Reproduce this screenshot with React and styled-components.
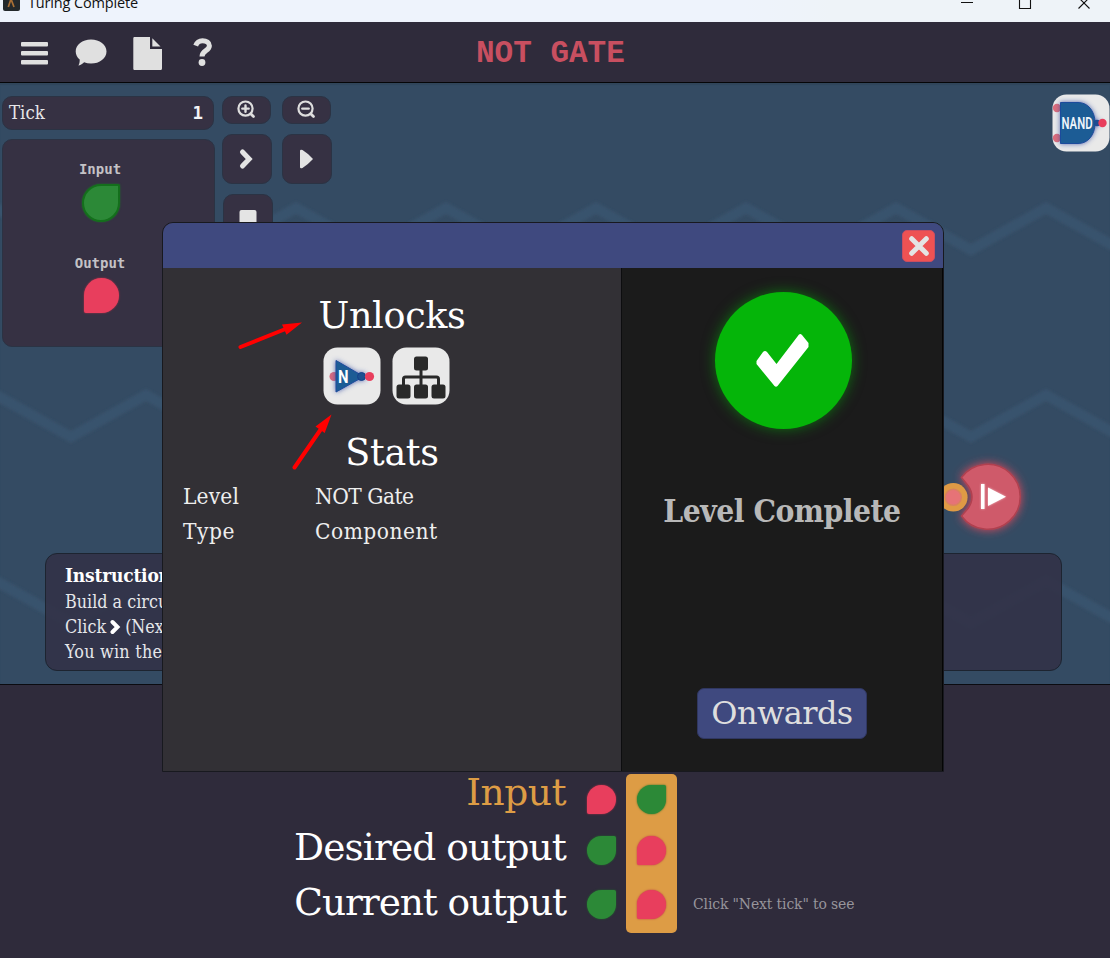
import React from "react";
import styled, { createGlobalStyle, css } from "styled-components";

const SLAB = '"DejaVu Serif Condensed", "DejaVu Serif", serif';
const WIDE_SLAB = '"DejaVu Serif", serif';

const GlobalStyle = createGlobalStyle`
  * { box-sizing: border-box; }
  body { margin: 0; background: #2f2b3b; }
`;

const Screen = styled.div`
  position: relative;
  width: 1110px;
  height: 958px;
  overflow: hidden;
  display: flex;
  flex-direction: column;
  background: #2f2b3b;
`;

const TitleBar = styled.header`
  height: 22px;
  flex: none;
  display: flex;
  align-items: flex-start;
  justify-content: space-between;
  padding-left: 3px;
  overflow: hidden;
  background: linear-gradient(90deg, #eef3fc 0 67%, #eef3f8 75% 100%);
`;

const AppName = styled.div`
  display: flex;
  gap: 8px;
  color: #111;
  font: 14.5px/20px "Open Sans", "Noto Sans", sans-serif;
  letter-spacing: -0.15px;
  white-space: nowrap;

  svg { display: block; }
  span { margin-top: -7px; }
`;

const Toolbar = styled.nav`
  height: 61px;
  flex: none;
  display: grid;
  grid-template-columns: 476px 1fr;
  border-bottom: 1px solid #050507;
  background: #2f2b3b;
`;

const LevelName = styled.h1`
  margin: 0;
  color: #c84f60;
  font: bold 31px/60px "Liberation Mono", monospace;
  padding-top: 2px;
  white-space: pre;
`;

const Board = styled.main`
  position: relative;
  height: 601px;
  flex: none;
  display: flex;
  flex-direction: column;
  justify-content: space-between;
  overflow: hidden;
  background: #344b63;
  box-shadow: inset 0 2px 1px #30455a;
`;

const Waves = styled.svg`
  position: absolute;
  inset: 0;
`;

const BoardTop = styled.div`
  position: relative;
  display: flex;
  padding: 13px 0 0 2px;
`;

const Tools = styled.div`
  display: grid;
  grid-template-columns: 50px 50px;
  gap: 10px;
  margin-left: 8px;
  align-content: start;
`;

const boxed = css`
  background: #363143;
  border: 1px solid #2b3344;
  border-radius: 10px;
`;

const ToolButton = styled.button`
  ${boxed}
  width: ${(p) => (p.$small ? 49 : 50)}px;
  height: ${(p) => (p.$small ? 28 : 50)}px;
  margin-left: ${(p) => p.$indent || 0}px;
  padding: 0;
  display: grid;
  place-items: center;

  svg { display: block; }
`;

const SidePanels = styled.div`
  width: 212px;
  display: flex;
  flex-direction: column;
  gap: 9px;
`;

const TickBox = styled.div`
  ${boxed}
  height: 34px;
  width: 212px;
  display: flex;
  align-items: center;
  justify-content: space-between;
  padding: 0 10px 0 6px;
`;

const Signals = styled.div`
  ${boxed}
  width: 213px;
  height: 208px;
  display: flex;
  flex-direction: column;
  align-items: center;
  padding: 21px 17px 0 0;

  i { position: relative; left: 1px; }
`;

const SignalLabel = styled.div`
  color: #c4c2c6;
  font: bold 14px/17px "DejaVu Sans Mono", monospace;
  margin-top: ${(p) => p.$top || 0}px;
  margin-bottom: 6px;
`;

const Counter = styled.span`
  color: #f4f4f6;
  font: bold 17.5px/32px "DejaVu Sans Mono", monospace;
`;

const Label = styled.span`
  font-family: ${(p) => (p.$wide ? WIDE_SLAB : SLAB)};
  font-size: ${(p) => p.$size}px;
  line-height: ${(p) => p.$line}px;
  letter-spacing: ${(p) => p.$track || 0}px;
  font-weight: ${(p) => (p.$bold ? 700 : 400)};
  color: ${(p) => p.$color || "#fff"};
  white-space: nowrap;
  display: block;
`;

const Leaf = styled.i`
  display: block;
  flex: none;
  width: ${(p) => p.$size}px;
  height: ${(p) => p.$size}px;
  background: ${(p) => (p.$on ? "#2c8937" : "#e83e5d")};
  border-radius: ${(p) => (p.$on ? "50% 2px 50% 50%" : "50% 50% 50% 2px")};
  border: ${(p) => (p.$on && p.$rim ? "2px solid #146f1c" : "0")};
  box-shadow: 0 0 2px ${(p) => (p.$on ? "#1f6f2a" : "#b9314a")};
`;

const NandTile = styled.div`
  margin-left: auto;
  margin-top: -2px;
  width: 58px;
  height: 58px;
`;

const OutputPin = styled.svg`
  position: absolute;
  left: 930px;
  top: 364px;
`;

const Instructions = styled.section`
  position: relative;
  width: 1017px;
  height: 118px;
  margin: 0 0 13px 45px;
  padding: 8px 19px;
  border: 1px solid #1d2430;
  border-radius: 12px;
  background: rgba(50, 49, 70, 0.86);
  overflow: hidden;
`;

const InlineRow = styled.div`
  display: flex;
  align-items: center;
  gap: 4px;
`;

const Results = styled.footer`
  flex: 1;
  border-top: 1px solid #0b0b10;
  display: grid;
  grid-template-columns: 566px 29px 51px auto;
  justify-content: start;
  align-items: start;
  background: #2f2b3b;
`;

const ResultLabels = styled.div`
  padding-top: 80px;
  text-align: right;
`;

const Chips = styled.div`
  display: flex;
  flex-direction: column;
  align-items: center;
  height: 159px;
  margin-top: 89px;
  padding-top: 11px;
  gap: 22px;
  margin-left: ${(p) => (p.$active ? 31 : 21)}px;
  width: ${(p) => (p.$active ? 51 : 29)}px;
  border-radius: 5px;
  background: ${(p) => (p.$active ? "#dd9c45" : "transparent")};

  i:last-child { margin-top: 3px; }
`;

const Hint = styled.div`
  margin: 206px 0 0 47px;
`;

const Dialog = styled.section`
  position: absolute;
  left: 162px;
  top: 222px;
  width: 782px;
  height: 550px;
  display: grid;
  grid-template: 45px 1fr / 459px 1fr;
  border: 1px solid #18191f;
  border-radius: 11px 11px 0 0;
  overflow: hidden;
`;

const DialogBar = styled.header`
  grid-column: 1 / -1;
  display: flex;
  justify-content: flex-end;
  align-items: center;
  padding: 1px 8px 0 0;
  background: #3f497f;
`;

const CloseButton = styled.button`
  width: 33px;
  height: 32px;
  padding: 0;
  border: 1px solid #c94e61;
  border-radius: 5px;
  background: #ee5253;
  display: grid;
  place-items: center;
`;

const Rewards = styled.div`
  background: #323035;
  border-right: 1px solid #0d0d0f;
  padding-top: 23px;
  display: flex;
  flex-direction: column;
  align-items: center;
`;

const Tiles = styled.div`
  display: flex;
  gap: 11px;
  height: 58px;
  margin: 6px 12px 23px 0;

  svg { display: block; }
`;

const Stats = styled.dl`
  align-self: stretch;
  display: grid;
  grid-template-columns: 132px 1fr;
  grid-auto-rows: 35px;
  margin: 1px 0 0 20px;
`;

const Outcome = styled.div`
  background: #1b1b1b;
  border-right: 1px solid #050505;
  display: flex;
  flex-direction: column;
  align-items: center;
  justify-content: space-between;
  padding: 24px 0 32px;
`;

const Badge = styled.div`
  width: 137px;
  height: 137px;
  margin-left: 2px;
  border-radius: 50%;
  background: #05b509;
  box-shadow: 0 0 14px rgba(5, 181, 9, 0.55);
  display: grid;
  place-items: center;
`;

const Verdict = styled.div`
  margin-bottom: 95px;
`;

const OnwardsButton = styled.button`
  width: 170px;
  height: 51px;
  padding: 0;
  border: 1px solid #303761;
  border-radius: 7px;
  background: #3f497f;
  text-align: center;
`;

const Arrows = styled.svg`
  position: absolute;
  left: 230px;
  top: 310px;
`;

const zig = (y) => {
  const pts = [];
  for (let i = -1; i < 16; i++) pts.push(`${-4 + i * 75},${i % 2 === 0 ? y : y + 42}`);
  return pts.join(" ");
};

const Zoom = ({ plus }) => (
  <svg width="20" height="20" viewBox="0 0 20 20" fill="none" stroke="#dedede" strokeWidth="2.2" strokeLinecap="round">
    <circle cx="8.5" cy="8.6" r="7.1" />
    <path d="M13.700 13.800 16.500 16.600" strokeWidth="2.8" />
    <path d={plus ? "M5.300 8.600h6.400M8.500 5.400v6.400" : "M5.300 8.600h6.400"} strokeWidth="2.4" />
  </svg>
);

const Chevron = () => (
  <svg width="22" height="22" viewBox="0 0 22 22" fill="none" stroke="#e4e4e4" strokeWidth="5" strokeLinejoin="miter">
    <path d="M6.500 4 13.200 11 6.500 18" strokeLinecap="round" />
  </svg>
);

const MenuIcons = () => (
  <svg width="230" height="60" viewBox="0 22 230 60" fill="#e0e0e0">
    <rect x="21" y="42" width="27" height="4.5" rx="1" />
    <rect x="21" y="51" width="27" height="4.5" rx="1" />
    <rect x="21" y="60" width="27" height="4.5" rx="1" />
    <path d="M91 39.500c8.700 0 15.500 5.300 15.500 11.900S99.700 63.500 91 63.500c-2.500 0-4.800-.4-6.900-1.200-1.700 1.600-4.200 3.200-5.700 3.200 1-1.500 1.400-4 1.300-6-2.400-2.100-4-5-4-8.100 0-6.600 6.700-11.900 15.300-11.900z" />
    <path d="M134.500 37H150v12h12v19.500a1.500 1.500 0 0 1-1.500 1.500h-26a1.200 1.200 0 0 1-1.200-1.200V38.200a1.200 1.200 0 0 1 1.200-1.200z" />
    <path d="M152.300 38.200 160.500 46.500h-8.200z" />
    <path d="M195.700 45.700c1.200-3.400 3.600-5 6.800-5 4 0 6.900 1.900 6.900 5 0 5.200-7.400 4.800-7.400 10.700" fill="none" stroke="#e0e0e0" strokeWidth="5" />
    <circle cx="202" cy="62.500" r="3.400" />
  </svg>
);

const Tile = ({ children }) => (
  <svg width="58" height="58" viewBox="0 0 58 58">
    <defs>
      <filter id="halo" x="-30%" y="-30%" width="160%" height="160%">
        <feDropShadow dx="0" dy="0" stdDeviation="2.4" floodColor="#3346a0" floodOpacity="0.8" />
      </filter>
    </defs>
    <rect x="0.500" y="0.500" width="57" height="57" rx="14" fill="#e9e9e9" />
    {children}
  </svg>
);

const NandIcon = () => (
  <Tile>
    <circle cx="5" cy="14" r="4.200" fill="#dc6d7b" />
    <circle cx="5" cy="44" r="4.200" fill="#dc6d7b" />
    <g filter="url(#halo)">
      <path d="M8.500 8.500H26C36 8.500 43 17 43 29s-7 20.500-17 20.500H8.500z" fill="#1e5c95" stroke="#1f4b9c" strokeWidth="1" />
      <circle cx="45" cy="29" r="3.300" fill="#1a4b91" />
    </g>
    <circle cx="50.500" cy="29" r="4.200" fill="#e83e5d" />
    <text x="9.500" y="35" textLength="31" lengthAdjust="spacingAndGlyphs" fontFamily="Roboto, sans-serif" fontWeight="600" fontSize="17" fill="#eef4fb">NAND</text>
  </Tile>
);

const NotIcon = () => (
  <Tile>
    <circle cx="11" cy="29.500" r="4.500" fill="#d96b7e" />
    <g filter="url(#halo)">
      <path d="M13 13.500 38 28v3L13 45z" fill="#1e5c95" stroke="#1f4b9c" strokeWidth="1" />
      <circle cx="38.500" cy="29.500" r="4" fill="#1b5190" stroke="#14408a" strokeWidth="1" />
    </g>
    <circle cx="46.500" cy="29.500" r="4.600" fill="#e83e5d" />
    <text x="15" y="35.500" textLength="10.500" lengthAdjust="spacingAndGlyphs" fontFamily="Roboto, sans-serif" fontWeight="700" fontSize="18.500" fill="#fff">N</text>
  </Tile>
);

const TreeIcon = () => (
  <Tile>
    <g fill="#292929">
      <rect x="22" y="9.500" width="14" height="14" rx="2.500" />
      <rect x="4.500" y="37.500" width="14" height="14" rx="2.500" />
      <rect x="22" y="37.500" width="14" height="14" rx="2.500" />
      <rect x="39.500" y="37.500" width="14" height="14" rx="2.500" />
    </g>
    <path d="M29 23v15M11.500 38v-6a2 2 0 0 1 2-2h31a2 2 0 0 1 2 2v6" fill="none" stroke="#292929" strokeWidth="3" />
  </Tile>
);

export default function App() {
  return (
    <Screen>
      <GlobalStyle />
      <TitleBar>
        <AppName>
          <svg width="17" height="12" viewBox="0 0 17 12">
            <rect y="-6" width="17" height="17" rx="2" fill="#23282b" />
            <path d="M5.300 7 8 -1l3 8" fill="none" stroke="#a96f35" strokeWidth="1.700" />
          </svg>
          <span>Turing Complete</span>
        </AppName>
        <svg width="160" height="12" viewBox="950 0 160 12" fill="none" stroke="#111" strokeWidth="1.100">
          <path d="M961 2.500h12M1019.500-2v10.500h11v-10.500M1078.500 8.500l11-11M1089.500 8.500l-11-11" />
        </svg>
      </TitleBar>

      <Toolbar>
        <MenuIcons />
        <LevelName>NOT GATE</LevelName>
      </Toolbar>

      <Board>
        <Waves width="1110" height="601" viewBox="0 83 1110 601">
          <defs>
            <filter id="soft"><feGaussianBlur stdDeviation="1.800" /></filter>
          </defs>
          <g fill="none" stroke="#38526d" strokeWidth="10.500" filter="url(#soft)">
            <polyline points={zig(208)} />
            <polyline points={zig(395)} />
            <polyline points={zig(581)} />
          </g>
        </Waves>
        <BoardTop>
          <SidePanels>
            <TickBox>
              <Label $size={18.5} $line={32} $color="#e6e6e8">Tick</Label>
              <Counter>1</Counter>
            </TickBox>
            <Signals>
              <SignalLabel>Input</SignalLabel>
              <Leaf $on $rim $size={38} />
              <SignalLabel $top={33}>Output</SignalLabel>
              <Leaf $size={35} />
            </Signals>
          </SidePanels>
          <Tools>
            <ToolButton $small><Zoom plus /></ToolButton>
            <ToolButton $small><Zoom /></ToolButton>
            <ToolButton><Chevron /></ToolButton>
            <ToolButton>
              <svg width="22" height="22" viewBox="0 0 22 22"><path d="M4 3q0-2 2.500-1 5 3 10.500 9-5.500 6-10.500 9Q4 21 4 19z" fill="#e4e4e4" /></svg>
            </ToolButton>
            <ToolButton $indent={1}>
              <svg width="18" height="18" viewBox="0 0 18 18"><rect x="0.500" width="17" height="17" rx="2" fill="#e4e4e4" /></svg>
            </ToolButton>
          </Tools>
          <NandTile><NandIcon /></NandTile>
        </BoardTop>

        <OutputPin width="130" height="100" viewBox="930 447 130 100">
          <defs>
            <filter id="glow" x="-40%" y="-40%" width="180%" height="180%">
              <feDropShadow dx="0" dy="0" stdDeviation="5" floodColor="#f04a5c" floodOpacity="0.9" />
            </filter>
            <filter id="shine" x="-40%" y="-40%" width="180%" height="180%">
              <feDropShadow dx="0" dy="0" stdDeviation="1.200" floodColor="#ffffff" floodOpacity="0.6" />
            </filter>
          </defs>
          <path d="M961.500 477.500A32.500 32.500 0 1 1 961.500 516L968 508.500Q972 503 972 497T968 485.500z" fill="#cf5a6b" stroke="#b0414f" strokeWidth="1.500" filter="url(#glow)" />
          <g fill="#fff" filter="url(#shine)">
            <rect x="981" y="484" width="3.500" height="25" />
            <path d="M988 487.500 1006 496.700 988 506z" />
          </g>
          <circle cx="953.300" cy="497.300" r="14.300" fill="#df9a45" />
          <circle cx="953.300" cy="497.300" r="8" fill="#e67377" stroke="#d98160" strokeWidth="1.500" />
        </OutputPin>

        <Instructions>
          <Label $bold $size={19} $line={27} $track={-0.2}>Instructions</Label>
          <Label $size={17.8} $line={25} $color="#e6e7ea">Build a circuit</Label>
          <InlineRow>
            <Label $size={17.8} $line={25} $color="#e6e7ea">Click</Label>
            <svg width="11" height="16" viewBox="0 0 11 16"><path d="M2.500 3 7.500 8l-5 5" fill="none" stroke="#fff" strokeWidth="4" strokeLinecap="round" /></svg>
            <Label $size={17.8} $line={25} $color="#e6e7ea">(Next tick)</Label>
          </InlineRow>
          <Label $size={17.8} $line={25} $track={0.25} $color="#e6e7ea">You win the level</Label>
        </Instructions>
      </Board>

      <Results>
        <ResultLabels>
          <Label $wide $size={37.5} $line={55} $track={-0.5} $color="#dd9c45">Input</Label>
          <Label $wide $size={37.5} $line={55} $track={-0.9}>Desired output</Label>
          <Label $wide $size={37.5} $line={55} $track={-1.1}>Current output</Label>
        </ResultLabels>
        <Chips>
          <Leaf $size={29} />
          <Leaf $on $size={29} />
          <Leaf $on $size={29} />
        </Chips>
        <Chips $active>
          <Leaf $on $size={29} />
          <Leaf $size={29} />
          <Leaf $size={29} />
        </Chips>
        <Hint>
          <Label $size={15.5} $line={26} $track={-0.12} $color="#97959b">Click "Next tick" to see</Label>
        </Hint>
      </Results>

      <Dialog>
        <DialogBar>
          <CloseButton aria-label="Close">
            <svg width="22" height="22" viewBox="0 0 22 22"><path d="M3.700 3.700 18.300 18.300M18.300 3.700 3.700 18.300" stroke="#e4e4e4" strokeWidth="5" strokeLinecap="round" /></svg>
          </CloseButton>
        </DialogBar>
        <Rewards>
          <Label $wide $size={36.5} $line={50} $track={-0.3}>Unlocks</Label>
          <Tiles><NotIcon /><TreeIcon /></Tiles>
          <Label $wide $size={36.5} $line={50} $track={-0.3}>Stats</Label>
          <Stats>
            <Label as="dt" $size={22.5} $line={35} $track={0.15} $color="#eeeeee">Level</Label>
            <Label $size={22.5} $line={35} $track={-0.5} $color="#eeeeee">NOT Gate</Label>
            <Label as="dt" $size={22.5} $line={35} $track={0.5} $color="#eeeeee">Type</Label>
            <Label $size={22.5} $line={35} $track={0.5} $color="#eeeeee">Component</Label>
          </Stats>
        </Rewards>
        <Outcome>
          <Badge>
            <svg width="56" height="56" viewBox="0 0 56 56"><path d="M1.500 28 8 19q2-2 4 0l9.500 12L44 1.500q1.500-1 3 .5l6.500 8v4L22.500 53q-1.500 1.500-3 0L1.500 31z" fill="#fff" /></svg>
          </Badge>
          <Verdict>
            <Label $bold $size={31.5} $line={46} $track={-0.5} $color="#b8b8b8">Level Complete</Label>
          </Verdict>
          <OnwardsButton><Label $wide $size={32} $line={49} $track={-0.6} $color="#dedede">Onwards</Label></OnwardsButton>
        </Outcome>
      </Dialog>

      <Arrows width="110" height="170" viewBox="230 310 110 170" fill="#ff0000" stroke="#ff0000" strokeLinecap="round">
        <path d="M240.500 347 288 328M294.500 467.500 321 429" strokeWidth="4" />
        <path d="M302 322.500 282 324.500 286.500 334.800z M331.500 414.500 315.500 426.500 324.700 433z" stroke="none" />
      </Arrows>
    </Screen>
  );
}
